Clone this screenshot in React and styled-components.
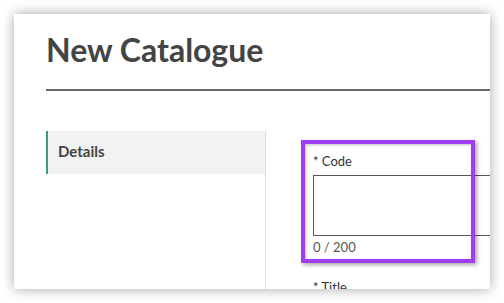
import React from "react";
import styled, { createGlobalStyle } from "styled-components";

const Global = createGlobalStyle`
  html, body { margin: 0; padding: 0; background: #ffffff; }
  body { font-family: Lato, "Open Sans", sans-serif; }
  * { box-sizing: border-box; }
`;

const Page = styled.div`
  width: 504px;
  height: 303px;
  padding: 14px;
  background: #ffffff;
`;

const Card = styled.div`
  width: 476px;
  height: 275px;
  background: #ffffff;
  box-shadow: 0 0 12px rgba(0, 0, 0, 0.35);
  overflow: hidden;
  padding: 16px 0 0 32px;
`;

const Inner = styled.div`
  width: 640px;
`;

const Title = styled.h1`
  margin: 0;
  font-family: Lato, sans-serif;
  font-weight: 700;
  font-size: 32px;
  line-height: 40px;
  color: #444444;
  padding-bottom: 19px;
  border-bottom: 2px solid #666666;
`;

const Body = styled.div`
  display: flex;
  margin-top: 40px;
`;

const Sidebar = styled.nav`
  width: 220px;
  min-height: 200px;
  border-right: 1px solid #dcdcdc;
`;

const NavItem = styled.div`
  height: 43px;
  display: flex;
  align-items: center;
  padding-left: 10px;
  padding-bottom: 3px;
  background: ${(p) => (p.$active ? "#f2f2f2" : "transparent")};
  border-left: 2px solid ${(p) => (p.$active ? "#3a9a88" : "transparent")};
  font-size: 15px;
  font-weight: 700;
  color: #444444;
`;

const FormColumn = styled.div`
  padding: 21px 0 0 47px;
  flex: 1;
`;

const Field = styled.div`
  position: relative;
  margin-bottom: 22px;
`;

const Label = styled.label`
  display: block;
  font-size: 13px;
  line-height: 18px;
  color: #333333;
`;

const TextArea = styled.textarea`
  display: block;
  margin-top: 5px;
  width: 300px;
  height: 61px;
  border: 1px solid #555555;
  border-radius: 0;
  resize: none;
  font-family: inherit;
  padding: 4px;
`;

const Counter = styled.div`
  margin-top: 2px;
  font-size: 13px;
  line-height: 18px;
  color: #555555;
`;

const Highlight = styled.div`
  position: absolute;
  left: -12px;
  top: -12px;
  width: 174px;
  height: 123px;
  border: 4px solid #a03cf2;
  box-shadow: 2px 2px 4px rgba(0, 0, 0, 0.35), inset 1px 1px 3px rgba(0, 0, 0, 0.25);
  pointer-events: none;
`;

export default function App() {
  return (
    <>
      <Global />
      <Page>
        <Card>
          <Inner>
            <Title>New Catalogue</Title>
            <Body>
              <Sidebar>
                <NavItem $active>Details</NavItem>
              </Sidebar>
              <FormColumn>
                <Field>
                  <Label>* Code</Label>
                  <TextArea />
                  <Counter>0 / 200</Counter>
                  <Highlight />
                </Field>
                <Field>
                  <Label>* Title</Label>
                  <TextArea />
                </Field>
              </FormColumn>
            </Body>
          </Inner>
        </Card>
      </Page>
    </>
  );
}
